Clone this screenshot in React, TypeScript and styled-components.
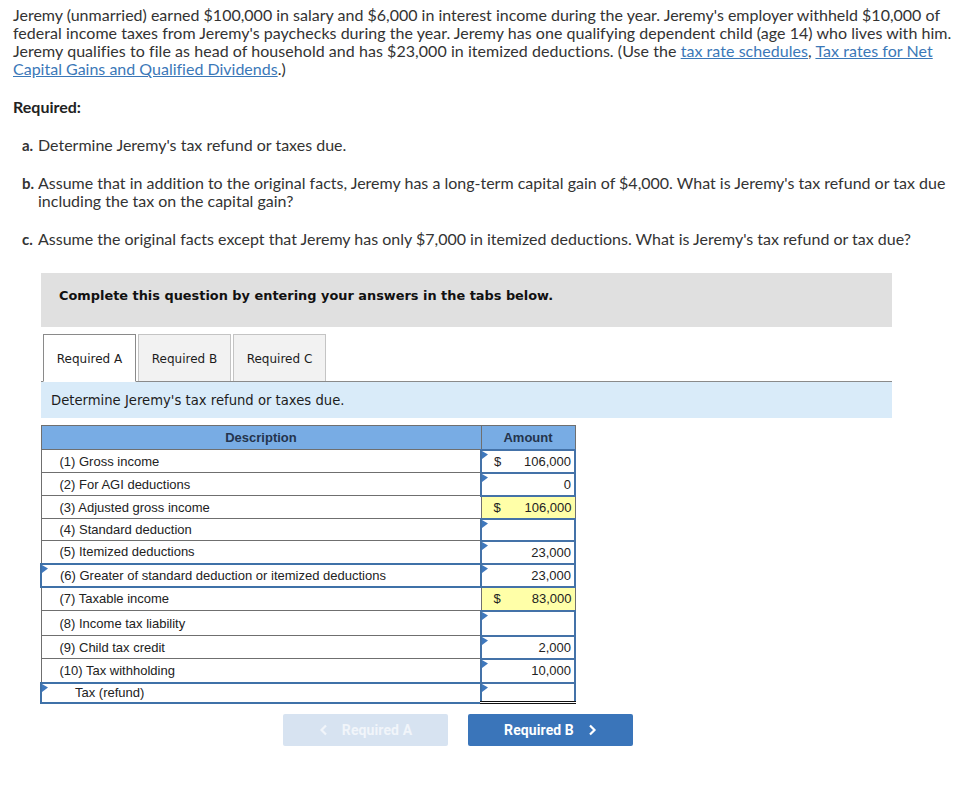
import React, { FC, ReactNode } from 'react'
import styled, { createGlobalStyle } from 'styled-components'

const GlobalStyle = createGlobalStyle`
  html, body {
    margin: 0;
    padding: 0;
    background: #fff;
  }
`

type RowData = {
  label: string
  amount?: string
  dollar?: boolean
  height: number
  labelInput?: boolean
  kind?: 'input' | 'calc'
  indent?: boolean
  total?: boolean
}

const rows: RowData[] = [
  { label: '(1) Gross income', dollar: true, amount: '106,000', height: 23, kind: 'input' },
  { label: '(2) For AGI deductions', amount: '0', height: 23, kind: 'input' },
  { label: '(3) Adjusted gross income', dollar: true, amount: '106,000', height: 23, kind: 'calc' },
  { label: '(4) Standard deduction', height: 22, kind: 'input' },
  { label: '(5) Itemized deductions', amount: '23,000', height: 23, kind: 'input' },
  { label: '(6) Greater of standard deduction or itemized deductions', amount: '23,000', height: 23, kind: 'input', labelInput: true },
  { label: '(7) Taxable income', dollar: true, amount: '83,000', height: 24, kind: 'calc' },
  { label: '(8) Income tax liability', height: 25, kind: 'input' },
  { label: '(9) Child tax credit', amount: '2,000', height: 23, kind: 'input' },
  { label: '(10) Tax withholding', amount: '10,000', height: 24, kind: 'input' },
  { label: 'Tax (refund)', height: 20, kind: 'input', labelInput: true, indent: true, total: true },
]

const Marker: FC = () => (
  <MarkerIcon width="6" height="8" viewBox="0 0 6 8" aria-hidden="true">
    <path d="M0 0 L6 3.5 L0 8 Z" fill="#3f78bd" />
  </MarkerIcon>
)

const Chevron: FC<{ dir: 'left' | 'right' }> = ({ dir }) => (
  <svg width="9" height="12" viewBox="0 0 9 12" aria-hidden="true">
    <path
      d={dir === 'left' ? 'M7 1.5 L2.5 6 L7 10.5' : 'M2 1.5 L6.5 6 L2 10.5'}
      fill="none"
      stroke="currentColor"
      strokeWidth="2.2"
    />
  </svg>
)

const Amount: FC<{ row: RowData }> = ({ row }) => {
  const body: ReactNode = (
    <>
      {row.kind === 'input' && <Marker />}
      {row.dollar && <Dollar>$</Dollar>}
      {row.amount}
    </>
  )
  return (
    <AmountCell $kind={row.kind} $total={row.total}>
      {body}
    </AmountCell>
  )
}

export default function App() {
  return (
    <Page>
      <GlobalStyle />
      <Intro>
        <IntroLine>
          Jeremy (unmarried) earned $100,000 in salary and $6,000 in interest income during the year. Jeremy's employer withheld $10,000 of
        </IntroLine>
        <IntroLine $tracking={0.03}>
          federal income taxes from Jeremy's paychecks during the year. Jeremy has one qualifying dependent child (age 14) who lives with him.
        </IntroLine>
        <IntroLine $tracking={0.05}>
          Jeremy qualifies to file as head of household and has $23,000 in itemized deductions. (Use the{' '}
          <Link href="#">tax rate schedules</Link>, <Link href="#">Tax rates for Net</Link>
        </IntroLine>
        <IntroLine>
          <Link href="#">Capital Gains and Qualified Dividends</Link>.)
        </IntroLine>
      </Intro>
      <RequiredTitle>Required:</RequiredTitle>
      <Parts>
        <Part>
          <PartLetter>a.</PartLetter>
          <span>Determine Jeremy's tax refund or taxes due.</span>
        </Part>
        <Part>
          <PartLetter>b.</PartLetter>
          <span>
            Assume that in addition to the original facts, Jeremy has a long-term capital gain of $4,000. What is Jeremy's tax refund or tax due
            <br />
            including the tax on the capital gain?
          </span>
        </Part>
        <Part>
          <PartLetter>c.</PartLetter>
          <span>Assume the original facts except that Jeremy has only $7,000 in itemized deductions. What is Jeremy's tax refund or tax due?</span>
        </Part>
      </Parts>

      <Question>
        <Instruction>Complete this question by entering your answers in the tabs below.</Instruction>
        <Tabs>
          <Tab $active>Required A</Tab>
          <Tab>Required B</Tab>
          <Tab>Required C</Tab>
        </Tabs>
        <Band>Determine Jeremy's tax refund or taxes due.</Band>
        <Sheet>
          <thead>
            <tr>
              <HeadCell $width={440}>Description</HeadCell>
              <HeadCell $width={94}>Amount</HeadCell>
            </tr>
          </thead>
          <tbody>
            {rows.map((row) => (
              <Row key={row.label} $height={row.height}>
                <LabelCell $input={row.labelInput} $indent={row.indent}>
                  {row.labelInput && <Marker />}
                  {row.label}
                </LabelCell>
                <Amount row={row} />
              </Row>
            ))}
          </tbody>
        </Sheet>
        <Nav>
          <NavButton $disabled>
            <Chevron dir="left" />
            Required A
          </NavButton>
          <NavButton>
            Required B
            <Chevron dir="right" />
          </NavButton>
        </Nav>
      </Question>
    </Page>
  )
}

const Page = styled.div`
  width: 972px;
  height: 795px;
  box-sizing: border-box;
  padding: 6px 0 0 13px;
  overflow: hidden;
  font-family: Lato, 'Open Sans', sans-serif;
  font-size: 16px;
  line-height: 18px;
  color: #333;
  font-variant-ligatures: none;
`

const Intro = styled.div`
  white-space: nowrap;
`

const IntroLine = styled.div<{ $tracking?: number }>`
  letter-spacing: ${({ $tracking }) => $tracking ?? 0}px;
`

const Link = styled.a`
  color: #3b78b8;
  text-decoration: underline;
`

const RequiredTitle = styled.h4`
  margin: 20px 0 0;
  font-size: 16px;
  line-height: 18px;
  font-weight: 700;
  color: #222;
`

const Parts = styled.div`
  display: flex;
  flex-direction: column;
  gap: 20px;
  margin-top: 20px;
  padding-left: 9px;
`

const Part = styled.div`
  display: flex;
  white-space: nowrap;
`

const PartLetter = styled.b`
  width: 16px;
  color: #333;
  font-size: 15px;
`

const Question = styled.div`
  margin: 25px 0 0 28px;
  width: 851px;
`

const Instruction = styled.div`
  height: 54px;
  box-sizing: border-box;
  padding: 15px 18px 0;
  background: #e0e0e0;
  font-family: 'DejaVu Sans', Verdana, sans-serif;
  font-size: 12.9px;
  line-height: 16px;
  font-weight: 700;
  color: #111;
`

const Tabs = styled.div`
  display: flex;
  gap: 2px;
  height: 47px;
  margin-top: 7px;
  padding-left: 2px;
  border-bottom: 1px solid #8a8a8a;
`

const Tab = styled.div<{ $active?: boolean }>`
  width: 93px;
  height: ${({ $active }) => ($active ? '48px' : '47px')};
  box-sizing: border-box;
  display: flex;
  align-items: center;
  justify-content: center;
  padding-top: ${({ $active }) => ($active ? '1px' : '2px')};
  font-family: 'DejaVu Sans', Verdana, sans-serif;
  font-size: 12px;
  color: #1c1c1c;
  background: ${({ $active }) => ($active ? '#fff' : '#f2f2f2')};
  border: 1px solid ${({ $active }) => ($active ? '#8a8a8a' : '#c4c4c4')};
  border-bottom: ${({ $active }) => ($active ? '1px solid #fff' : '0')};
  z-index: 1;
`

const Band = styled.div`
  height: 36px;
  box-sizing: border-box;
  padding: 11px 10px 0;
  background: #d9ebf9;
  font-family: 'DejaVu Sans', Verdana, sans-serif;
  font-size: 13.2px;
  line-height: 16px;
  color: #1c1c1c;
`

const Sheet = styled.table`
  margin: 7px 0 0 -1px;
  width: 534px;
  table-layout: fixed;
  border-collapse: collapse;
  font-family: 'Liberation Sans', Arial, sans-serif;
  font-size: 13px;
  color: #222;
`

const HeadCell = styled.th<{ $width: number }>`
  box-sizing: border-box;
  width: ${({ $width }) => $width}px;
  height: 24px;
  padding: 1px 0 0;
  background: #78ace4;
  border: 1px solid #6f6f6f;
  font-weight: 700;
  font-size: 13px;
  color: #24344d;
`

const Row = styled.tr<{ $height: number }>`
  height: ${({ $height }) => $height}px;
`

const LabelCell = styled.td<{ $input?: boolean; $indent?: boolean }>`
  position: relative;
  box-sizing: border-box;
  padding: ${({ $indent }) => ($indent ? '0 0 0 33px' : '1px 0 0 18px')};
  border: ${({ $input }) => ($input ? '2px solid #3f71a8' : '1px solid #6f6f6f')};
  white-space: nowrap;
`

const AmountCell = styled.td<{ $kind?: 'input' | 'calc'; $total?: boolean }>`
  position: relative;
  box-sizing: border-box;
  padding: ${({ $total }) => ($total ? '0 3px 0 0' : '1px 3px 0 0')};
  text-align: right;
  background: ${({ $kind }) => ($kind === 'calc' ? '#ffffa8' : '#fff')};
  border: ${({ $kind }) => ($kind === 'input' ? '2px solid #4472a8' : '1px solid #6f6f6f')};
  border-bottom: ${({ $total }) => ($total ? '3px double #111' : undefined)};
`

const Dollar = styled.span`
  position: absolute;
  left: 12px;
`

const MarkerIcon = styled.svg`
  position: absolute;
  left: 0;
  top: 0;
`

const Nav = styled.div`
  display: flex;
  gap: 20px;
  margin: 10px 0 0 242px;
`

const NavButton = styled.div<{ $disabled?: boolean }>`
  width: 165px;
  height: 32px;
  display: flex;
  align-items: center;
  justify-content: center;
  gap: 14px;
  border-radius: 2px;
  background: ${({ $disabled }) => ($disabled ? '#d7e3f1' : '#3a75ba')};
  color: ${({ $disabled }) => ($disabled ? '#f1f5fa' : '#fff')};
  font-family: Roboto, Arial, sans-serif;
  font-size: 14px;
  font-weight: 700;
  letter-spacing: 0.1px;
`
